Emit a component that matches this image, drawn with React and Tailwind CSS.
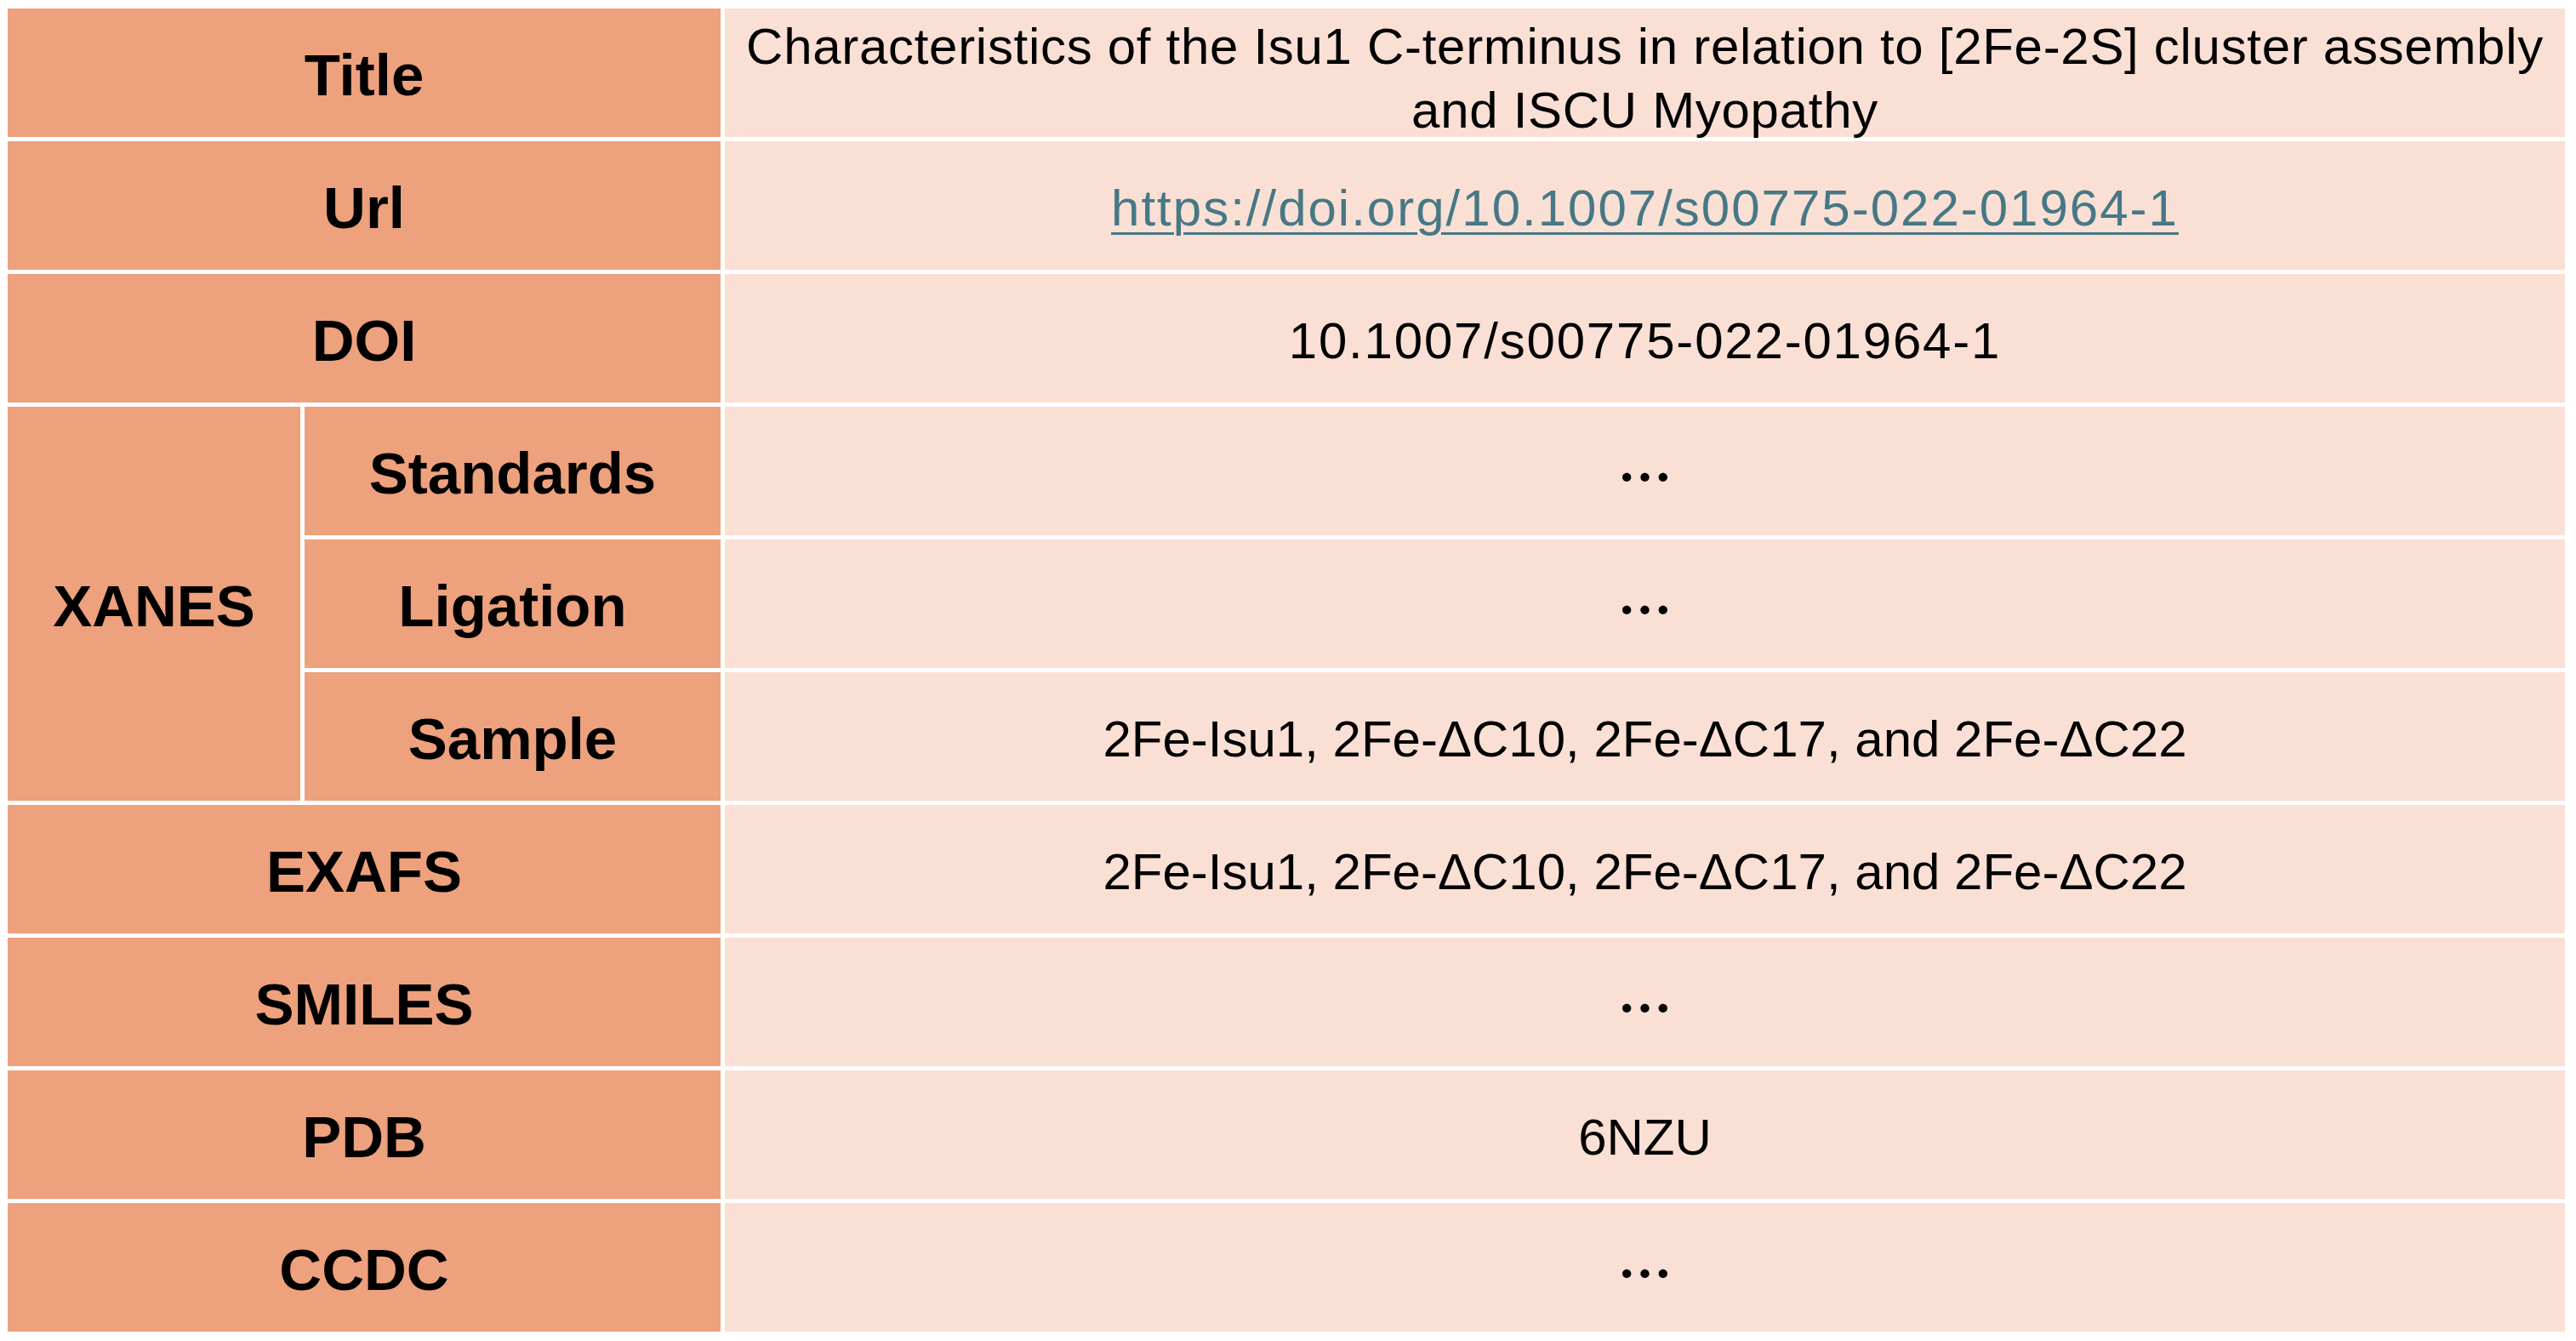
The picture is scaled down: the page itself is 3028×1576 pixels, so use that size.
const label =
  "flex items-center justify-center bg-[#eda17d] pt-[6px] text-[69px] font-bold text-black font-['Liberation_Sans',Arial,sans-serif]";
const value =
  "flex items-center justify-center bg-[#fadfd4] pt-[6px] text-[60px] text-black font-['Liberation_Sans',Arial,sans-serif]";

function Dots() {
  return (
    <span className="text-[64px] font-bold font-['Noto_Sans_CJK_SC','Noto_Sans_CJK_JP',sans-serif]">…</span>
  );
}

export default function App() {
  return (
    <div className="w-[3028px] h-[1576px] bg-white pl-[9px] pt-[10px]">
      <div className="grid grid-cols-[344px_489px_2163px] grid-rows-[repeat(10,151px)] gap-[5px]">
        {/* Title */}
        <div className={`${label} col-span-2`}>Title</div>
        <div className="flex items-start justify-center bg-[#fadfd4] pt-[7px] text-center text-[60px] leading-[75px] tracking-[0.7px] text-black font-['Liberation_Sans',Arial,sans-serif]">
          <p>
            Characteristics of the Isu1 C-terminus in relation to [2Fe-2S] cluster assembly
            <br />
            and ISCU Myopathy
          </p>
        </div>

        {/* Url */}
        <div className={`${label} col-span-2`}>Url</div>
        <div className={value}>
          <a
            href="https://doi.org/10.1007/s00775-022-01964-1"
            className="tracking-[2px] text-[#467886] underline decoration-[3px] underline-offset-[8px]"
          >
            https://doi.org/10.1007/s00775-022-01964-1
          </a>
        </div>

        {/* DOI */}
        <div className={`${label} col-span-2`}>DOI</div>
        <div className={value}>
          <span className="tracking-[1.8px]">10.1007/s00775-022-01964-1</span>
        </div>

        {/* XANES group */}
        <div className={`${label} row-span-3`}>XANES</div>
        <div className={label}>Standards</div>
        <div className={value}>
          <Dots />
        </div>
        <div className={label}>Ligation</div>
        <div className={value}>
          <Dots />
        </div>
        <div className={label}>Sample</div>
        <div className={value}>2Fe-Isu1, 2Fe-ΔC10, 2Fe-ΔC17, and 2Fe-ΔC22</div>

        {/* EXAFS */}
        <div className={`${label} col-span-2`}>EXAFS</div>
        <div className={value}>2Fe-Isu1, 2Fe-ΔC10, 2Fe-ΔC17, and 2Fe-ΔC22</div>

        {/* SMILES */}
        <div className={`${label} col-span-2`}>SMILES</div>
        <div className={value}>
          <Dots />
        </div>

        {/* PDB */}
        <div className={`${label} col-span-2`}>PDB</div>
        <div className={value}>6NZU</div>

        {/* CCDC */}
        <div className={`${label} col-span-2`}>CCDC</div>
        <div className={value}>
          <Dots />
        </div>
      </div>
    </div>
  );
}
